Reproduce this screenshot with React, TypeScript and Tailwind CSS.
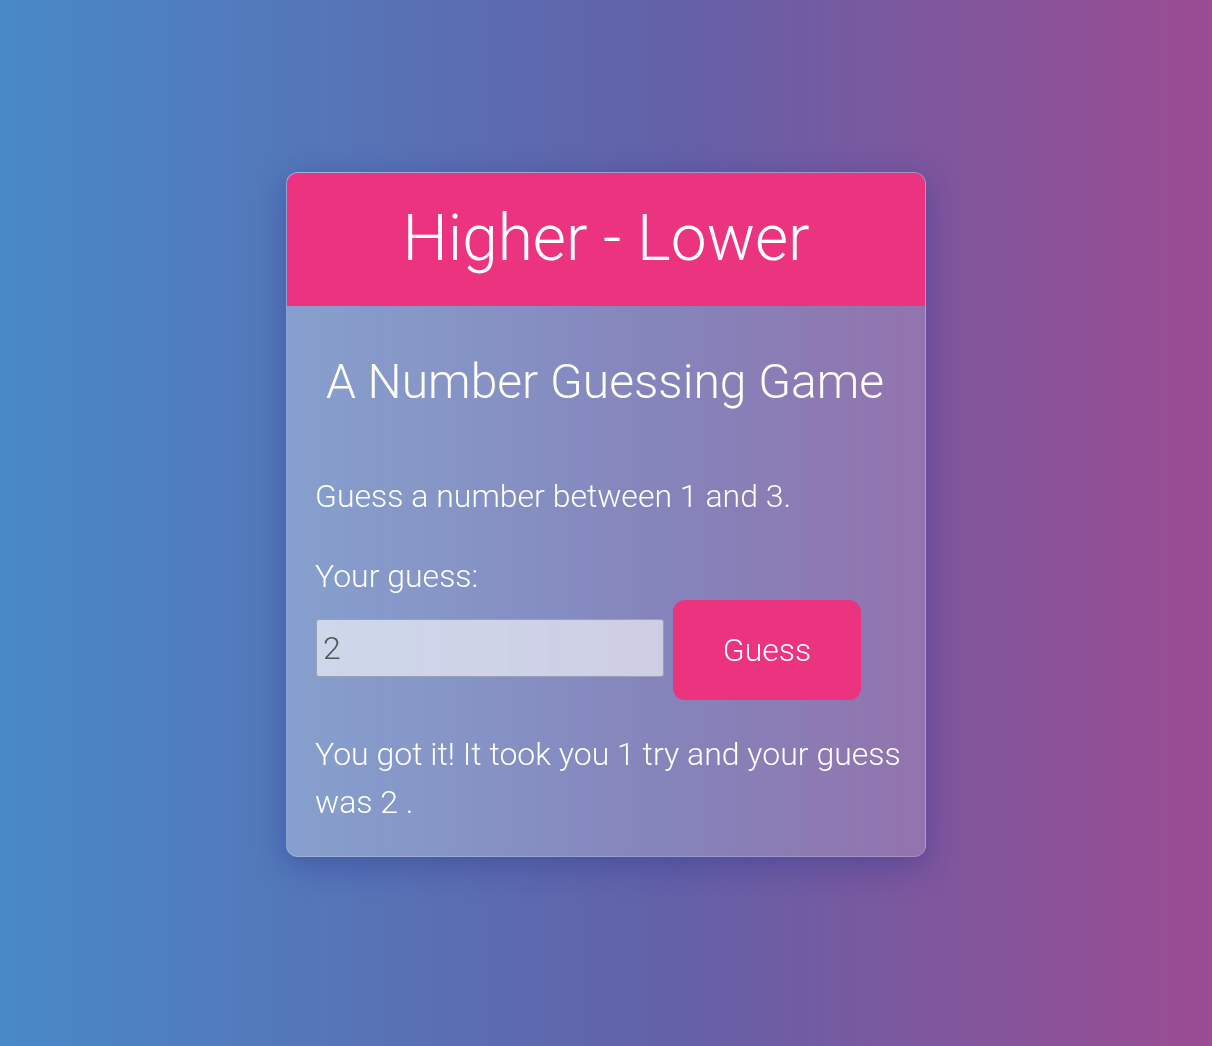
import React, { useState } from "react";

export default function App() {
  const [value, setValue] = useState("2");

  return (
    <div
      className="min-h-[1046px] w-full bg-[linear-gradient(to_right,#4889c7,#6361a8_55%,#9b4c92)] pt-[172px]"
      style={{ fontFamily: "Roboto, 'Noto Sans', sans-serif" }}
    >
      <div className="mx-auto w-[640px] overflow-hidden rounded-[12px] border border-white/20 bg-gradient-to-r from-white/30 to-white/[0.17] shadow-[0_8px_32px_0_rgba(31,38,135,0.37)] backdrop-blur-[4px]">
        <header className="-mx-px -mt-px flex h-[134px] items-center justify-center bg-[#ec3380]">
          <h1 className="text-[64px] font-light leading-[1.2] text-white">Higher - Lower</h1>
        </header>

        <main className="pb-[30px] pl-[28px] pr-[21px] pt-[47px] font-light text-white">
          <h2 className="pr-[9px] text-center text-[48px] leading-[1.2]">A Number Guessing Game</h2>

          <p className="mt-[61px] text-[32px] leading-[48px]">Guess a number between 1 and 3.</p>

          <label htmlFor="guess" className="mt-[32px] block text-[32px] leading-[48px]">
            Your guess:
          </label>

          <div className="flex items-start gap-[9px]">
            <input
              id="guess"
              type="number"
              value={value}
              onChange={(e) => setValue(e.target.value)}
              className="ml-px mt-[19px] h-[58px] w-[348px] rounded-[3px] border border-[#9a9fb8] bg-white/60 px-[6px] text-[32px] font-light text-[#555] outline-none [appearance:textfield]"
            />
            <button
              type="button"
              className="h-[100px] w-[188px] rounded-[12px] bg-[#ec3380] text-[32px] font-light text-white"
            >
              Guess
            </button>
          </div>

          <p className="mt-[30px] text-[32px] leading-[48px]">
            You got it! It took you 1 try and your guess was 2 .
          </p>
        </main>
      </div>
    </div>
  );
}
